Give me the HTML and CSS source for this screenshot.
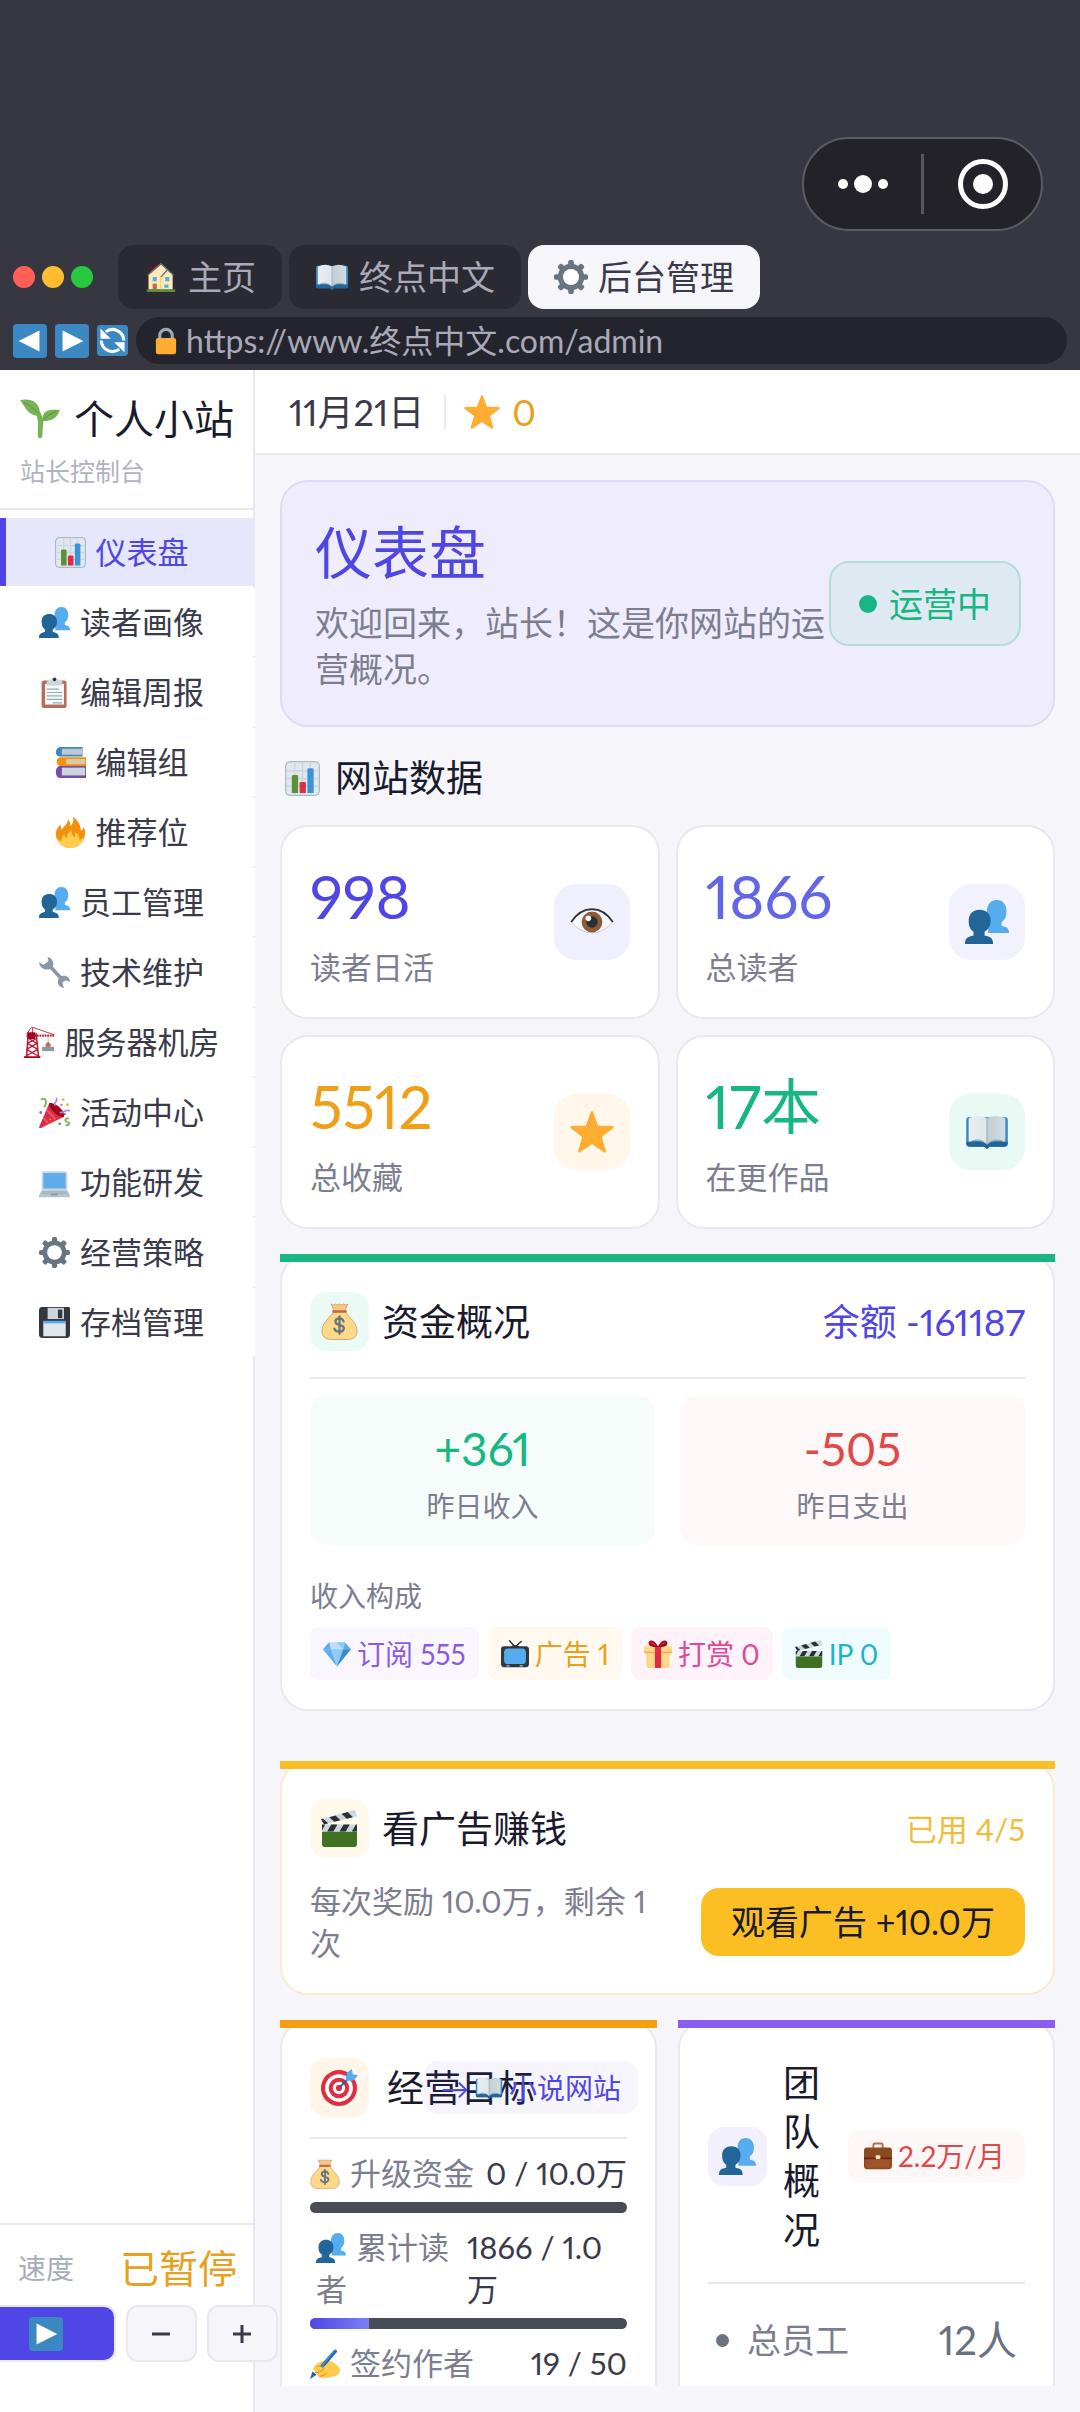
FILE: index.html
```html
<!DOCTYPE html>
<html lang="zh-CN">
<head>
  <meta charset="UTF-8">
  <meta name="viewport" content="width=device-width, initial-scale=1.0">
  <title>后台管理</title>
  <link rel="stylesheet" href="styles.css">
</head>
<body>
  <svg class="sprite" aria-hidden="true">
    <defs>
      <linearGradient id="pageShade"><stop offset="0" stop-color="#e8eef2"/><stop offset=".5" stop-color="#dfe6ea"/><stop offset=".5" stop-color="#c3cdd4"/><stop offset="1" stop-color="#d3dce1"/></linearGradient>
    </defs>
    <symbol id="i-house" viewBox="0 0 36 36">
      <path fill="#a0041e" d="M6 9l7-6 5 3-12 11z"/>
      <path fill="#ffe8b6" d="M3 33V15L18 3l14 12v18z"/>
      <path fill="#ffcc4d" d="M17 17h1v16h-1z"/>
      <path fill="none" stroke="#66757f" stroke-width="1.6" d="M2 16L18 2l15 14M18 18l8-9"/>
      <path fill="#55acee" d="M8 18h5v5H8zM23 18h5v5h-5zM22 27h5v4h-5z"/>
      <path fill="#c1694f" d="M8 26h5v7H8z"/>
      <path fill="#5c913b" d="M1 33h34v3H1z"/>
    </symbol>
    <symbol id="i-book" viewBox="0 0 36 36">
      <path fill="#3b88c3" d="M1 8q0-2 2-2h30q2 0 2 2v20q0 2-2 2H20l-2 2-2-2H3q-2 0-2-2z"/>
      <path fill="#226699" d="M1 26q0 4 3 4h12l2 2 2-2h12q3 0 3-4z"/>
      <path fill="url(#pageShade)" d="M3 7q8-4 15 0 7-4 15 0v19q-9-3-15 2-6-5-15-2z"/>
      <path fill="none" stroke="#99aab5" stroke-width=".8" d="M4 26q8-4 14 2 6-6 14-2M18 7v20"/>
    </symbol>
    <symbol id="i-gear" viewBox="0 0 36 36">
      <g fill="#66757f">
        <rect x="15" y="0" width="6" height="36" rx="2"/>
        <rect x="15" y="0" width="6" height="36" rx="2" transform="rotate(45 18 18)"/>
        <rect x="15" y="0" width="6" height="36" rx="2" transform="rotate(90 18 18)"/>
        <rect x="15" y="0" width="6" height="36" rx="2" transform="rotate(135 18 18)"/>
        <circle cx="18" cy="18" r="14"/>
      </g>
      <circle class="hole" cx="18" cy="18" r="8.5"/>
    </symbol>
    <symbol id="i-back" viewBox="0 0 36 36">
      <rect width="36" height="36" rx="4" fill="#3b88c3"/>
      <path fill="#fff" d="M28 7v22L6 18z"/>
    </symbol>
    <symbol id="i-play" viewBox="0 0 36 36">
      <rect width="36" height="36" rx="4" fill="#3b88c3"/>
      <path fill="#fff" d="M8 7v22l22-11z"/>
    </symbol>
    <symbol id="i-refresh" viewBox="0 0 36 36">
      <rect width="36" height="36" rx="4" fill="#3b88c3"/>
      <path fill="none" stroke="#fff" stroke-width="3.6" d="M10 8a13 13 0 0 1 21 10M26 28A13 13 0 0 1 5 18"/>
      <path fill="#fff" d="M4 4v12h12zM32 32V20H20z"/>
    </symbol>
    <symbol id="i-lock" viewBox="0 0 36 36">
      <path fill="none" stroke="#99aab5" stroke-width="4" d="M10 18v-7a8 8 0 0 1 16 0v7"/>
      <rect x="5" y="14" width="26" height="21" rx="3" fill="#ffac33"/>
    </symbol>
    <symbol id="i-sprout" viewBox="0 0 36 36">
      <path fill="#77b255" d="M0 1c9-2 17 1 18 11 1 1 2 3 2 6 1-8 6-9 16-8-3 8-8 10-15 10l-1 14q-2 3-4 0c0-8 1-13-1-19C7 14 5 8 0 1z"/>
      <path fill="none" stroke="#5c913b" stroke-width=".8" d="M3 3q8 3 13 10M33 11q-8 3-12 8"/>
    </symbol>
    <symbol id="i-star" viewBox="0 0 36 36">
      <path fill="#ffac33" stroke="#ffac33" stroke-width="2" stroke-linejoin="round" d="M18 2l4.3 11.6 12.4.5-9.8 7.6 3.5 12.1L18 26.8 7.600 33.800l3.500-12.100L1.300 14.100l12.400-.5z"/>
    </symbol>
    <symbol id="i-chart" viewBox="0 0 36 36">
      <rect x=".7" y=".7" width="34.600" height="34.600" rx="4" fill="#e1e8ed" stroke="#99aab5" stroke-width="1"/>
      <path fill="none" stroke="#ccd6dd" stroke-width="1.500" d="M10 2v32M18 2v32M26 2v32M2 10h32M2 18h32M2 26h32"/>
      <path fill="#5c913b" d="M7 33V16q0-1.500 1.500-1.500h3.500q1.500 0 1.500 1.500v17z"/>
      <path fill="#dd2e44" d="M15 33V23q0-1.500 1.500-1.500h3.500q1.500 0 1.500 1.500v10z"/>
      <path fill="#3b94d9" d="M23 33V9q0-1.500 1.500-1.500H28q1.500 0 1.500 1.500v24z"/>
    </symbol>
    <symbol id="i-people" viewBox="0 0 36 36">
      <path fill="#55acee" d="M18 9c0-5 3-9 8-9s8 4 8 9c0 4-1 7-4 9v3c3 1 6 1 6 6H19z"/>
      <path fill="#269" d="M3 17c0-6 4-9 9-9s9 3 9 9c0 4-2 7-5 9v3c5 1 7 2 7 7H0c0-5 2-6 7-7v-3c-3-2-4-5-4-9z"/>
    </symbol>
    <symbol id="i-clipboard" viewBox="0 0 36 36">
      <rect x="3" y="4" width="29" height="32" rx="3" fill="#b76b5a"/>
      <path fill="#f5f8fa" d="M7 8h22v24H7z"/>
      <path fill="#ccd6dd" d="M9 10V6q0-3 4-3h2q0-3 3-3t3 3h2q4 0 4 3v4z"/>
      <circle cx="18" cy="3" r="2" fill="#292f33"/>
      <path stroke="#99aab5" stroke-width="1.400" d="M9 14h14M9 18h18M9 22h18M9 26h18M16 30h11"/>
    </symbol>
    <symbol id="i-books" viewBox="0 0 36 36">
      <path fill="#3b88c3" d="M5 0h27v11H5q-4-1-4-5t4-6z"/>
      <path fill="#bcc8d1" d="M8 2h24v7H8z"/>
      <path fill="#f4900c" d="M6 12h30v10H6q-4-1-4-5t4-5z"/>
      <path fill="#dcc9a8" d="M13 14h22v6H13z"/>
      <path fill="#744eaa" d="M5 22h31v14H5q-4-1-4-7t4-7z"/>
      <path fill="#ccd6dd" d="M8 24h27v9H8z"/>
    </symbol>
    <symbol id="i-fire" viewBox="0 0 36 36">
      <path fill="#f4900c" d="M35 19c0-3-.5-5-1.500-7.500-.5 2-1.500 3.500-3.500 4.500 0-6-3-12-9-16 1 6-1 8-3 11 0-3-.5-6-3-8 0 5-5 8-7 12-1-2-1-4-2-6-3 4-5 6-5 11 0 8 8 16 17 16s17-8 17-17z"/>
      <path fill="#ffcc4d" d="M28 23c1 3 0 4 0 4 1 0 4-2 5-5 0 8-6 14-15 14S3 30 3 24c1 2 3 4 5 4-1-3 0-6 3-8 0 2 1 4 3 5-1-4 2-8 5-10 0 3 1 6 4 9 1-2 1-4 0-6 3 1 4 3 5 5z"/>
    </symbol>
    <symbol id="i-wrench" viewBox="0 0 36 36">
      <path fill="#8899a6" d="M10 0c5 1 8 6 6 11l10 11c5-1 10 1 10 7l-5-2-4 3 2 6c-6-1-9-6-6-11L13 14C7 16 1 13 0 6l5 3 6-4z"/>
    </symbol>
    <symbol id="i-crane" viewBox="0 0 36 36">
      <g fill="none" stroke="#be1931">
        <path stroke-width="1.800" d="M5 7l-2 28M14 7l3 28"/>
        <path stroke-width="1.500" d="M5 13l10 6M15 13L4 19M4 19l12 7M15 19L3 26M3 26l14 8M16 26L2 34"/>
        <path stroke-width="1" d="M9 0l-6 8M9 0l26 9M10 1v7"/>
        <path stroke-width="2.600" stroke-dasharray="2 1" d="M3 10h32"/>
      </g>
      <path fill="#a0041e" d="M4 6h9v8H4zM0 34h19v2H0z"/>
      <path fill="none" stroke="#99aab5" stroke-width="1" d="M28 12v11"/>
      <path fill="#8899a6" d="M21 23h14v5H21z"/>
      <path fill="#c1694f" d="M25 20l3-3 3 3v3h-6z"/>
    </symbol>
    <symbol id="i-party" viewBox="0 0 36 36">
      <path fill="#dd2e44" d="M12 7L0 35q1 2 4 0l25-12Q24 10 12 7z"/>
      <path fill="#a0041e" d="M12 7c8-1 19 10 17 16-6 2-18-9-17-16z"/>
      <path fill="none" stroke="#ea596e" stroke-width="2" d="M9 15l10 11M5 24l6 7"/>
      <path fill="none" stroke="#77b255" stroke-width="2" d="M2 3c6-3 8 2 4 9M35 25c-5-1-6 3-2 4s2 4-2 4"/>
      <path fill="none" stroke="#aa8dd8" stroke-width="2" d="M20 1c3 4-4 5-1 9M36 16c-6-2-7 3-12 2"/>
      <g fill="#ffac33"><circle cx="28" cy="3" r="1.600"/><circle cx="33" cy="9" r="1.600"/><circle cx="13" cy="26" r="1"/></g>
      <g fill="#9266cc"><circle cx="2" cy="18" r="1.600"/><circle cx="26" cy="9" r="1.300"/></g>
      <g fill="#5c913b"><circle cx="24" cy="31" r="1.500"/><circle cx="30" cy="20" r="1.300"/></g>
    </symbol>
    <symbol id="i-laptop" viewBox="0 0 36 36">
      <rect x="3" y="5" width="30" height="22" rx="2" fill="#ccd6dd"/>
      <path fill="#5dadec" d="M5 7h26v18H5z"/>
      <path fill="#b8c5cd" d="M3 27h30l3 6v2H0v-2z"/>
      <path stroke="#99aab5" stroke-width="1" d="M4 29h28M3 31h30"/>
      <path fill="#8899a6" d="M14 31h8v2h-8z"/>
    </symbol>
    <symbol id="i-floppy" viewBox="0 0 36 36">
      <path fill="#31373d" d="M4 0h31q1 0 1 2v30q0 4-4 4H4q-4 0-4-4V4q0-4 4-4z"/>
      <path fill="#ccd6dd" d="M10 1h19v13H10z"/>
      <path fill="#31373d" d="M22 3h5v10h-5z"/>
      <path fill="#e1e8ed" d="M5 17h26v17H5z"/>
      <path fill="#55acee" d="M5 16h26v3H5z"/>
    </symbol>
    <symbol id="i-eye" viewBox="0 0 36 36">
      <path fill="#f5f8fa" stroke="#aab8c2" stroke-width=".5" d="M1 18Q9 8 18 8t17 10q-8 9-17 9T1 18z"/>
      <circle cx="18" cy="18" r="8.500" fill="#915a34"/>
      <circle cx="18" cy="18" r="4.700" fill="#292f33"/>
      <circle cx="15" cy="15" r="2.300" fill="#f5f8fa"/>
      <path fill="none" stroke="#292f33" stroke-width="1.400" d="M1 18Q8 7.500 18 7.500T35 18"/>
    </symbol>
    <symbol id="i-money" viewBox="0 0 36 36">
      <path fill="#f7c97d" stroke="#b98450" stroke-width=".6" d="M10 1q2 2 4 0 2 2 4 0 2 2 4 0 2 2 4 0l-3 8H13z"/>
      <path fill="#fdd888" stroke="#b98450" stroke-width=".6" d="M12 9h12c3 5 10 9 11 17 1 6-3 9-8 9.500H9C4 35 0 32 1 26 2 18 9 14 12 9z"/>
      <path fill="#bf6952" d="M11 7h14v2.400H11z"/>
      <path fill="none" stroke="#67757f" stroke-width="2.200" stroke-linecap="round" d="M22 18q-1-3-4-3c-5 0-5 5-1 6l3 1c4 2 2 6-2 6q-4 0-5-3M18 13v17"/>
    </symbol>
    <symbol id="i-gem" viewBox="0 0 36 36">
      <path fill="#bdddf4" d="M8 3h20l8 9-18 22L0 12z"/>
      <path fill="#5dadec" d="M0 12h10l8 22z"/>
      <path fill="#8ccaf7" d="M10 12h16l-8 22z"/>
      <path fill="#4289c1" d="M26 12h10L18 34z"/>
      <path fill="#5dadec" d="M8 3l2 9H0zM28 3l-2 9h10z"/>
      <path fill="#8ccaf7" d="M18 3l8 9 2-9z"/>
    </symbol>
    <symbol id="i-tv" viewBox="0 0 36 36">
      <path fill="none" stroke="#292f33" stroke-width="1.800" stroke-linecap="round" d="M11 1l7 8 8-7"/>
      <path fill="#31373d" d="M13 8q5-3 10 0h9q4 0 4 4v19q0 4-4 4H4q-4 0-4-4V12q0-4 4-4z"/>
      <rect x="4" y="11" width="28" height="20" rx="5" fill="#55acee"/>
      <path fill="#99aab5" d="M7 32h4v2H7zM24 32h4v2h-4z"/>
    </symbol>
    <symbol id="i-gift" viewBox="0 0 36 36">
      <path fill="#fdd888" d="M3 13h30v20q0 3-3 3H6q-3 0-3-3z"/>
      <rect y="9" width="36" height="8" rx="2" fill="#fcab40"/>
      <rect y="8" width="36" height="7" rx="2" fill="#fdd888"/>
      <path fill="#dd2e44" d="M14 9h8v27h-8z"/>
      <path fill="#a0041e" d="M18 8C13-1 6-1 6 4q-1 5 12 5 13 0 12-5c0-5-7-5-12 4z"/>
      <path fill="#dd2e44" d="M16 8C12 2 8 2 8 4t8 4zM20 8c4-6 8-6 8-4t-8 4z"/>
    </symbol>
    <symbol id="i-clapper" viewBox="0 0 36 36">
      <path fill="#3f7123" d="M1 21h34v12q0 3-3 3H4q-3 0-3-3z"/>
      <path fill="#ccd6dd" d="M1 14h34v7H1z"/>
      <path fill="#292f33" d="M1 14h3l-3 6zM10 14h6l-4 7H6zM22 14h6l-4 7h-6zM34 14h1v7h-5z"/>
      <path fill="#ccd6dd" d="M0 9L33 0l2 6L3 14z"/>
      <path fill="#292f33" d="M0 9l2-.5L7 13l-4 1zM8 7l6-1.700 5 4.700-6 1.500zM20 3.600l6-1.700L31 7l-6 1.500z"/>
    </symbol>
    <symbol id="i-target" viewBox="0 0 36 36">
      <circle cx="17.500" cy="18.500" r="17.500" fill="#dd2e44"/>
      <circle cx="17.500" cy="18.500" r="13.500" fill="#fff"/>
      <circle cx="17.500" cy="18.500" r="10" fill="#dd2e44"/>
      <circle cx="17.500" cy="18.500" r="6" fill="#fff"/>
      <circle cx="17.500" cy="18.500" r="3" fill="#dd2e44"/>
      <path stroke="#226699" stroke-width="1.800" d="M18 18L30 6"/>
      <path fill="#55acee" d="M24 11l1-7 5-4 1 5 5 1-4 5-7 1z"/>
    </symbol>
    <symbol id="i-case" viewBox="0 0 36 36">
      <path fill="none" stroke="#c1694f" stroke-width="2.500" d="M12 8V4q0-2 2-2h8q2 0 2 2v4"/>
      <rect y="7" width="36" height="28" rx="4" fill="#8a4b20"/>
      <path fill="#a0532a" d="M2 22h32v8q0 3-3 3H5q-3 0-3-3z"/>
      <path fill="#662113" d="M0 20h36v2H0z"/>
      <rect x="15" y="17" width="6" height="5" rx="1" fill="#ffe8b6"/>
    </symbol>
    <symbol id="i-write" viewBox="0 0 36 36">
      <path fill="#269" d="M0 36l3-9 5 4z"/>
      <path fill="#ffcc4d" d="M5 21C8 16 17 13 22 14c5 1 13 5 14 11 0 5-4 8-9 8-6 2-12 3-16 0-3-1-4-4-4-6-3-1-4-4-2-6z"/>
      <path fill="none" stroke="#f19020" stroke-width="1.300" d="M6 28q8 0 11-5M11 33q7-1 9-5M8 21q6 0 9-4"/>
      <path stroke="#3b88c3" stroke-width="4.500" stroke-linecap="round" d="M15 20L30 3"/>
      <path stroke="#269" stroke-width="1.500" d="M17 20L32 2"/>
    </symbol>
  </svg>

  <header class="browser">
    <div class="capsule">
      <button class="capsule-btn" aria-label="更多">
        <svg viewBox="0 0 60 20" class="dots"><circle cx="10" cy="10" r="5"/><circle cx="30" cy="10" r="9"/><circle cx="50" cy="10" r="5"/></svg>
      </button>
      <span class="capsule-line"></span>
      <button class="capsule-btn" aria-label="关闭">
        <svg viewBox="0 0 50 50" class="ring"><circle cx="25" cy="25" r="22.500" fill="none" stroke="#fff" stroke-width="5"/><circle cx="25" cy="25" r="10"/></svg>
      </button>
    </div>
    <div class="tabs">
      <span class="light red"></span>
      <span class="light yellow"></span>
      <span class="light green"></span>
      <button class="tab"><svg><use href="#i-house"/></svg>主页</button>
      <button class="tab"><svg><use href="#i-book"/></svg>终点中文</button>
      <button class="tab active"><svg><use href="#i-gear"/></svg>后台管理</button>
    </div>
    <div class="address">
      <button class="nav-btn" aria-label="后退"><svg><use href="#i-back"/></svg></button>
      <button class="nav-btn" aria-label="前进"><svg><use href="#i-play"/></svg></button>
      <button class="nav-btn small" aria-label="刷新"><svg><use href="#i-refresh"/></svg></button>
      <div class="url">
        <svg><use href="#i-lock"/></svg>
        <input type="text" aria-label="网址" value="https://www.终点中文.com/admin">
      </div>
    </div>
  </header>

  <div class="shell">
    <aside class="sidebar">
      <div class="brand">
        <h1><svg><use href="#i-sprout"/></svg>个人小站</h1>
        <p>站长控制台</p>
      </div>
      <nav class="menu">
        <a href="#" class="active"><svg><use href="#i-chart"/></svg>仪表盘</a>
        <a href="#"><svg><use href="#i-people"/></svg>读者画像</a>
        <a href="#"><svg><use href="#i-clipboard"/></svg>编辑周报</a>
        <a href="#"><svg><use href="#i-books"/></svg>编辑组</a>
        <a href="#"><svg><use href="#i-fire"/></svg>推荐位</a>
        <a href="#"><svg><use href="#i-people"/></svg>员工管理</a>
        <a href="#"><svg><use href="#i-wrench"/></svg>技术维护</a>
        <a href="#"><svg><use href="#i-crane"/></svg>服务器机房</a>
        <a href="#"><svg><use href="#i-party"/></svg>活动中心</a>
        <a href="#"><svg><use href="#i-laptop"/></svg>功能研发</a>
        <a href="#"><svg><use href="#i-gear"/></svg>经营策略</a>
        <a href="#"><svg><use href="#i-floppy"/></svg>存档管理</a>
      </nav>
      <div class="speed">
        <div class="speed-info"><span>速度</span><strong>已暂停</strong></div>
        <div class="speed-btns">
          <button class="play" aria-label="播放"><svg><use href="#i-play"/></svg></button>
          <button aria-label="减速"><svg viewBox="0 0 20 20"><path d="M1 10h18"/></svg></button>
          <button aria-label="加速"><svg viewBox="0 0 20 20"><path d="M1 10h18M10 1v18"/></svg></button>
        </div>
      </div>
    </aside>

    <div class="content">
      <div class="topbar">
        <span class="date">11月21日</span>
        <span class="stars"><svg><use href="#i-star"/></svg>0</span>
      </div>

      <main class="scroll">
        <section class="hero">
          <div>
            <h2>仪表盘</h2>
            <p>欢迎回来，站长！这是你网站的运营概况。</p>
          </div>
          <span class="status">运营中</span>
        </section>

        <h3 class="section-title"><svg><use href="#i-chart"/></svg>网站数据</h3>
        <section class="stats">
          <div class="stat indigo">
            <div><b>998</b><p>读者日活</p></div>
            <span class="stat-icon"><svg><use href="#i-eye"/></svg></span>
          </div>
          <div class="stat blue">
            <div><b>1866</b><p>总读者</p></div>
            <span class="stat-icon"><svg><use href="#i-people"/></svg></span>
          </div>
          <div class="stat amber">
            <div><b>5512</b><p>总收藏</p></div>
            <span class="stat-icon"><svg><use href="#i-star"/></svg></span>
          </div>
          <div class="stat green">
            <div><b>17本</b><p>在更作品</p></div>
            <span class="stat-icon"><svg><use href="#i-book"/></svg></span>
          </div>
        </section>

        <section class="card fund">
          <div class="card-head">
            <span class="card-icon"><svg><use href="#i-money"/></svg></span>
            <h3>资金概况</h3>
            <span class="balance">余额 -161187</span>
          </div>
          <div class="flows">
            <div class="flow income"><b>+361</b><p>昨日收入</p></div>
            <div class="flow expense"><b>-505</b><p>昨日支出</p></div>
          </div>
          <p class="caption">收入构成</p>
          <div class="tags">
            <span class="tag violet"><svg><use href="#i-gem"/></svg>订阅 555</span>
            <span class="tag amber"><svg><use href="#i-tv"/></svg>广告 1</span>
            <span class="tag pink"><svg><use href="#i-gift"/></svg>打赏 0</span>
            <span class="tag cyan"><svg><use href="#i-clapper"/></svg>IP 0</span>
          </div>
        </section>

        <section class="card ad">
          <div class="card-head">
            <span class="card-icon"><svg><use href="#i-clapper"/></svg></span>
            <h3>看广告赚钱</h3>
            <span class="used">已用 4/5</span>
          </div>
          <div class="ad-row">
            <p>每次奖励 10.0万，剩余 1 次</p>
            <button>观看广告 +10.0万</button>
          </div>
        </section>

        <div class="columns">
          <section class="card goals">
            <div class="card-head">
              <span class="card-icon"><svg><use href="#i-target"/></svg></span>
              <h3>经营目标</h3>
              <span class="tag indigo next-goal">→ <svg><use href="#i-book"/></svg>小说网站</span>
            </div>
            <div class="goal">
              <div class="goal-text"><span><svg><use href="#i-money"/></svg>升级资金</span><b>0 / 10.0万</b></div>
              <div class="bar"><div class="fill" style="width: 0%"></div></div>
            </div>
            <div class="goal wrap">
              <div class="goal-text"><span><svg><use href="#i-people"/></svg>累计读者</span><b>1866 / 1.0万</b></div>
              <div class="bar"><div class="fill" style="width: 18.66%"></div></div>
            </div>
            <div class="goal">
              <div class="goal-text"><span><svg><use href="#i-write"/></svg>签约作者</span><b>19 / 50</b></div>
              <div class="bar"><div class="fill" style="width: 38%"></div></div>
            </div>
          </section>

          <section class="card team">
            <div class="card-head">
              <span class="card-icon"><svg><use href="#i-people"/></svg></span>
              <h3>团队概况</h3>
              <span class="tag red"><svg><use href="#i-case"/></svg>2.2万/月</span>
            </div>
            <div class="member-row"><span>总员工</span><b>12人</b></div>
          </section>
        </div>
      </main>
    </div>
  </div>
</body>
</html>
```
FILE: styles.css
```css
* {
  box-sizing: border-box;
}
body {
  margin: 0;
  height: 100vh;
  overflow: hidden;
  display: flex;
  flex-direction: column;
  background: #f5f5fa;
  color: #1a1a2e;
  font-family: Lato, "Noto Sans CJK SC", sans-serif;
  font-size: 31px;
  line-height: 42px;
  font-variant-numeric: proportional-nums;
}
h1, h2, h3, p {
  margin: 0;
  font-weight: normal;
}
b, strong {
  font-weight: normal;
}
button, input {
  font: inherit;
  color: inherit;
  border: none;
  padding: 0;
  background: none;
}
button {
  cursor: pointer;
}
svg {
  display: block;
  flex: none;
}
.sprite {
  position: absolute;
  width: 0;
  height: 0;
}
.hole {
  fill: #fff;
}

/* browser chrome */
.browser {
  flex: none;
  display: flex;
  flex-direction: column;
  padding: 137px 13px 6px;
  background: #373741;
  color: #a9a9b8;
}
.capsule {
  align-self: flex-end;
  display: flex;
  align-items: center;
  width: 241px;
  height: 94px;
  margin: 0 24px 14px 0;
  border: 2px solid #5b5b62;
  border-radius: 47px;
  background: #232228;
}
.capsule-btn {
  flex: 1;
  display: flex;
  justify-content: center;
}
.capsule svg {
  fill: #fff;
}
.dots {
  width: 60px;
  height: 20px;
}
.ring {
  width: 50px;
  height: 50px;
}
.capsule-line {
  width: 3px;
  height: 60px;
  background: #56565c;
}
.tabs {
  display: flex;
  align-items: center;
  gap: 7px;
}
.light {
  width: 22px;
  height: 22px;
  border-radius: 50%;
}
.red.light {
  background: #ff5f57;
}
.yellow.light {
  background: #febc2e;
}
.green.light {
  background: #28c840;
  margin-right: 18px;
}
.tab {
  display: flex;
  align-items: center;
  gap: 10px;
  height: 64px;
  padding: 0 26px;
  border-radius: 16px;
  background: #2a2a33;
  font-size: 34px;
}
.tab svg {
  width: 34px;
  height: 34px;
}
.tab:first-of-type svg {
  padding: 2px;
}
.tab.active {
  background: #f5f5fa;
  color: #3a3a4a;
}
.address {
  display: flex;
  align-items: center;
  gap: 8px;
  margin-top: 8px;
}
.nav-btn svg {
  width: 34px;
  height: 34px;
}
.nav-btn.small svg {
  width: 31px;
  height: 31px;
}
.url {
  flex: 1;
  display: flex;
  align-items: center;
  gap: 6px;
  height: 47px;
  padding: 0 16px;
  border-radius: 24px;
  background: #24242c;
}
.url svg {
  width: 28px;
  height: 28px;
}
.url input {
  flex: 1;
  min-width: 0;
  height: 42px;
  font-size: 32px;
}

.shell {
  flex: 1;
  min-height: 0;
  display: flex;
}

/* sidebar */
.sidebar {
  flex: none;
  width: 255px;
  display: flex;
  flex-direction: column;
  background: #fff;
  border-right: 2px solid #e8e8ee;
  position: relative;
  z-index: 1;
}
.brand {
  padding: 22px 20px 16px;
  border-bottom: 2px solid #e8e8ee;
}
.brand h1 {
  display: flex;
  align-items: center;
  gap: 14px;
  font-size: 40px;
  line-height: 54px;
  white-space: nowrap;
}
.brand h1 svg {
  width: 40px;
  height: 40px;
}
.brand p {
  margin-top: 4px;
  font-size: 25px;
  color: #b0b3c0;
}
.menu {
  display: flex;
  flex-direction: column;
  gap: 2px;
  margin: 8px -2px 0 0;
}
.menu a {
  display: flex;
  align-items: center;
  justify-content: center;
  gap: 10px;
  height: 68px;
  padding-right: 18px;
  border-left: 6px solid #fff;
  background: #fff;
  color: #3a3a4a;
  text-decoration: none;
  white-space: nowrap;
}
.menu a.active {
  background: #e6e7fd;
  border-color: #4f46e5;
  color: #4f46e5;
}
.menu svg {
  width: 31px;
  height: 31px;
}
.speed {
  margin-top: auto;
  padding: 16px 0 50px;
  border-top: 2px solid #e8e8ee;
}
.speed-info {
  display: flex;
  align-items: center;
  justify-content: space-between;
  padding: 0 16px 0 18px;
  font-size: 28px;
  color: #a9adba;
}
.speed-info strong {
  font-size: 39px;
  line-height: 54px;
  color: #e8a020;
}
.speed-btns {
  display: flex;
  align-items: center;
  justify-content: center;
  gap: 10px;
  margin-top: 10px;
}
.speed-btns button {
  flex: none;
  display: flex;
  align-items: center;
  justify-content: center;
  width: 71px;
  height: 57px;
  border: 2px solid #e8e8ee;
  border-radius: 12px;
  background: #f5f5fa;
}
.speed-btns svg {
  width: 20px;
  height: 20px;
  stroke: #3a3a4a;
  stroke-width: 3;
}
.speed-btns .play {
  width: 140px;
  background: #4f46e5;
  border-color: #e6e6fc;
}
.speed-btns .play svg {
  width: 34px;
  height: 34px;
  stroke: none;
}

/* main area */
.content {
  flex: 1;
  min-width: 0;
  display: flex;
  flex-direction: column;
  padding-bottom: 26px;
}
.topbar {
  flex: none;
  display: flex;
  align-items: center;
  height: 85px;
  padding: 0 34px;
  background: #fff;
  border-bottom: 2px solid #e8e8ee;
  font-size: 36px;
}
.date {
  padding-right: 20px;
  border-right: 2px solid #e8e8ee;
  line-height: 34px;
  color: #3a3a4a;
}
.stars {
  display: flex;
  align-items: center;
  gap: 12px;
  padding-left: 18px;
  color: #e8a020;
}
.stars svg {
  width: 36px;
  height: 36px;
}
.scroll {
  flex: 1;
  min-height: 0;
  overflow-y: auto;
  scrollbar-width: none;
  padding: 25px 25px 0;
}

.hero {
  display: flex;
  align-items: center;
  justify-content: space-between;
  padding: 33px 32px 33px 33px;
  border: 2px solid #dedcf4;
  border-radius: 28px;
  background: #efedfb;
}
.hero h2 {
  margin-bottom: 10px;
  font-size: 57px;
  line-height: 75px;
  color: #4f46e5;
}
.hero p {
  font-size: 34px;
  line-height: 46px;
  color: #7c7e90;
}
.status {
  flex: none;
  display: flex;
  align-items: center;
  gap: 12px;
  height: 85px;
  padding: 0 28px;
  border: 2px solid #b5ddd8;
  border-radius: 20px;
  background: #dfe9f1;
  font-size: 34px;
  color: #17b683;
}
.status::before {
  content: "";
  width: 18px;
  height: 18px;
  border-radius: 50%;
  background: #17b683;
}

.section-title {
  display: flex;
  align-items: center;
  gap: 15px;
  padding: 26px 5px 22px;
  font-size: 37px;
  line-height: 50px;
}
.section-title svg {
  width: 35px;
  height: 35px;
}
.stats {
  display: grid;
  grid-template-columns: 1fr 1fr;
  gap: 16px;
}
.stat {
  display: flex;
  align-items: center;
  justify-content: space-between;
  padding: 29px 28px;
  border: 2px solid #e8e8ee;
  border-radius: 28px;
  background: #fff;
}
.stat b {
  display: block;
  margin-bottom: 10px;
  font-size: 60px;
  line-height: 80px;
}
.stat p {
  color: #7c7e90;
}
.stat-icon {
  display: flex;
  align-items: center;
  justify-content: center;
  width: 76px;
  height: 76px;
  border-radius: 22px;
}
.stat-icon svg {
  width: 44px;
  height: 44px;
}
.stat.indigo b {
  color: #4f46e5;
}
.stat.indigo .stat-icon {
  background: #f0effd;
}
.stat.blue b {
  color: #6366e8;
}
.stat.blue .stat-icon {
  background: #f2f2fe;
}
.stat.amber b {
  color: #f0a018;
}
.stat.amber .stat-icon {
  background: #fef7ea;
}
.stat.green b {
  color: #17b683;
}
.stat.green .stat-icon {
  background: #e9f9f4;
}

/* cards */
.card {
  position: relative;
  margin-top: 25px;
  padding: 36px 28px 29px;
  border: 2px solid #e8e8ee;
  border-radius: 28px;
  background: #fff;
}
.card::before {
  content: "";
  position: absolute;
  top: -2px;
  left: -2px;
  right: -2px;
  height: 8px;
  background: #17b683;
}
.card-head {
  display: flex;
  align-items: center;
  gap: 13px;
}
.card-head h3 {
  flex: 1;
  font-size: 37px;
  line-height: 49px;
}
.card-icon {
  flex: none;
  display: flex;
  align-items: center;
  justify-content: center;
  width: 59px;
  height: 59px;
  border-radius: 16px;
}
.card-icon svg {
  width: 37px;
  height: 37px;
}
.fund .card-head {
  padding-bottom: 26px;
  border-bottom: 2px solid #e8e8ee;
}
.fund .card-icon {
  background: #ecfaf5;
}
.balance {
  font-size: 37px;
  color: #4f46e5;
}
.flows {
  display: grid;
  grid-template-columns: 1fr 1fr;
  gap: 25px;
  margin-top: 17px;
}
.flow {
  padding: 22px 0 18px;
  border-radius: 16px;
  text-align: center;
}
.flow b {
  display: block;
  font-size: 46px;
  line-height: 62px;
}
.flow p {
  margin-top: 5px;
  font-size: 28px;
  color: #7c7e90;
}
.income {
  background: #f6fcfa;
}
.income b {
  color: #17b683;
}
.expense {
  background: #fef8f8;
}
.expense b {
  color: #e04848;
}
.caption {
  margin-top: 30px;
  font-size: 28px;
  color: #7c7e90;
}
.tags {
  display: flex;
  flex-wrap: wrap;
  gap: 9px;
  margin-top: 10px;
}
.tag {
  display: flex;
  align-items: center;
  gap: 6px;
  height: 53px;
  padding: 0 13px;
  border-radius: 9px;
  font-size: 28px;
  white-space: nowrap;
}
.tag svg {
  width: 28px;
  height: 28px;
}
.tag.violet {
  background: #f9f6fe;
  color: #8b5ce0;
}
.tag.amber {
  background: #fff9f0;
  color: #e8a020;
}
.tag.pink {
  background: #fef3f9;
  color: #e0479b;
}
.tag.cyan {
  background: #f0fbfd;
  color: #1cb4c8;
}
.tag.indigo {
  background: rgba(99, 80, 240, 0.06);
  color: #4f46e5;
}
.tag.red {
  background: #fef7f7;
  color: #e04848;
}

.card.ad {
  margin-top: 50px;
  border-color: #f8eccb;
}
.card.ad::before {
  background: #f9be28;
}
.ad .card-icon {
  background: #fff9ec;
}
.used {
  color: #f2bd3a;
}
.ad-row {
  display: flex;
  align-items: center;
  justify-content: space-between;
  gap: 20px;
  margin-top: 22px;
}
.ad-row p {
  color: #7c7e90;
}
.ad-row button {
  flex: none;
  height: 68px;
  padding: 0 30px;
  border-radius: 18px;
  background: #fbbf24;
  color: #1a1a2e;
  font-size: 34px;
}

.columns {
  display: grid;
  grid-template-columns: 1fr 1fr;
  gap: 21px;
}
.goals::before {
  background: #f59e12;
}
.goals .card-head {
  padding-bottom: 20px;
  border-bottom: 2px solid #e8e8ee;
  gap: 18px;
}
.goals .card-icon {
  background: #fff5e9;
}
.next-goal {
  position: absolute;
  top: 39px;
  right: 17px;
  border-radius: 14px;
  padding: 0 17px;
}
.goal {
  margin-top: 13px;
}
.goal-text {
  display: flex;
  justify-content: space-between;
}
.goal-text span {
  color: #7c7e90;
}
.goal-text svg {
  display: inline-block;
  width: 30px;
  height: 30px;
  margin-right: 10px;
  vertical-align: -4px;
}
.goal-text b {
  color: #3a3a4a;
}
.wrap .goal-text {
  gap: 16px;
  padding-left: 6px;
}
.wrap .goal-text span {
  flex: 0 0 134px;
}
.wrap .goal-text b {
  flex: 0 1 160px;
}
.bar {
  height: 11px;
  margin-top: 8px;
  border-radius: 6px;
  background: #474c56;
  overflow: hidden;
}
.fill {
  height: 100%;
  background: linear-gradient(90deg, #4f46e5, #7b7ff5);
}
.team::before {
  background: #8b5cf0;
}
.team .card-head {
  padding-bottom: 28px;
  border-bottom: 2px solid #e8e8ee;
  gap: 16px;
}
.team .card-head h3 {
  flex: 0 1 37px;
}
.team .card-icon {
  background: #f3f0fe;
}
.team .tag {
  margin-left: auto;
  padding: 0 20px 0 16px;
  border-radius: 14px;
}
.member-row {
  display: flex;
  align-items: center;
  gap: 18px;
  padding: 29px 8px 0;
  font-size: 34px;
  line-height: 54px;
  color: #7c7e90;
}
.member-row::before {
  content: "";
  width: 13px;
  height: 13px;
  border-radius: 50%;
  background: #6b7280;
}
.member-row b {
  margin-left: auto;
  font-size: 40px;
  color: #6b7080;
}
```
